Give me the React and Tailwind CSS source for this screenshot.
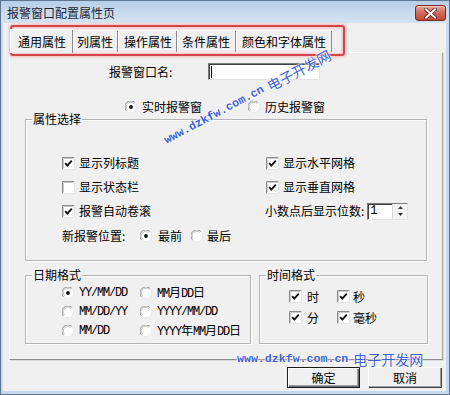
import React from "react";

const CN = "font-['Noto_Sans_CJK_SC','Noto_Sans',sans-serif]";
const MONO = "font-['Liberation_Mono',monospace]";
const DM = `${MONO} text-[12px] tracking-[-1.2px]`;

function Check({ checked = true }) {
  return (
    <svg width="13" height="13" viewBox="0 0 13 13" className="shrink-0 block">
      <rect x="0" y="0" width="13" height="13" fill="#ffffff" />
      <path d="M0.5 12.5 V0.5 H12.5" fill="none" stroke="#8a8a8a" />
      <path d="M1.5 11.5 V1.5 H11.5" fill="none" stroke="#c8c8c8" />
      <path d="M12.5 0.5 V12.5 H0.5" fill="none" stroke="#e4e4e4" />
      {checked && (
        <polyline points="3.2,6.2 5.3,8.6 9.8,3.6" fill="none" stroke="#111" strokeWidth="1.9" />
      )}
    </svg>
  );
}

function Radio({ checked = false }) {
  return (
    <svg width="12" height="12" viewBox="0 0 12 12" className="shrink-0 block">
      <circle cx="6" cy="6" r="5.5" fill="#ffffff" />
      <path d="M1.6 10 A5.2 5.2 0 0 1 10 1.6" fill="none" stroke="#8c8c8c" strokeWidth="1" />
      <path d="M2.6 9 A4 4 0 0 1 9 2.6" fill="none" stroke="#c4c4c4" strokeWidth="1" />
      <path d="M10 1.6 A5.2 5.2 0 0 1 1.6 10" fill="none" stroke="#e8e8e8" strokeWidth="1" />
      {checked && <circle cx="6" cy="6" r="1.9" fill="#111" />}
    </svg>
  );
}

function Group({ title, className = "", children }) {
  return (
    <div className={`relative border border-[#b4b4b4] shadow-[inset_1px_1px_0_#ffffff,1px_1px_0_#ffffff] ${className}`}>
      <span className="absolute left-[6px] -top-[8px] bg-[#f0f0f0] px-[1px] leading-[14px]">
        {title}
      </span>
      {children}
    </div>
  );
}

function Button({ children, isDefault = false }) {
  return (
    <div
      className={`h-[21px] flex items-center justify-center bg-[#f0f0f0] ${
        isDefault
          ? "w-[73px] border border-[#1a1a1a] shadow-[inset_1px_1px_0_#ffffff,inset_-1px_-1px_0_#696969,inset_-2px_-2px_0_#a0a0a0]"
          : "w-[74px] shadow-[inset_1px_1px_0_#ffffff,inset_-1px_-1px_0_#404040,inset_-2px_-2px_0_#a0a0a0]"
      }`}
    >
      <span className="text-[12px] leading-[14px]">{children}</span>
    </div>
  );
}

function Watermark({ className = "" }) {
  return (
    <div
      className={`absolute flex items-center whitespace-nowrap text-[#3d5fd8] [text-shadow:0_0_2px_#ffffff,0_0_2px_#ffffff,0_0_1px_#ffffff] ${className}`}
    >
      <span className={`${MONO} text-[11.6px] leading-[16px] font-bold`}>www.dzkfw.com.cn</span>
      <span className={`${CN} text-[14px] leading-[16px] ml-[5px]`}>电子开发网</span>
    </div>
  );
}

export default function App() {
  return (
    <div
      className={`${CN} relative w-[450px] h-[395px] overflow-hidden flex flex-col bg-[#c6d9ee] border border-[#5f7590] text-[12px] leading-[14px] text-black`}
    >
      {/* Title bar */}
      <div className="h-[22px] shrink-0 flex items-start justify-between pl-[6px] pr-[3px] bg-gradient-to-b from-[#b8cfe9] to-[#d5e3f2]">
        <span className="mt-[5px] text-[12px] leading-[14px] text-[#1b2635]">报警窗口配置属性页</span>
        <div className="mt-[4px] w-[31px] h-[16px] rounded-[3px] border border-[#7a2a22] bg-gradient-to-b from-[#e6a596] via-[#d2695a] to-[#c24a38] shadow-[inset_0_1px_0_#f3c9bf] flex items-center justify-center">
          <svg width="13" height="11" viewBox="0 0 13 11">
            <path d="M2 1.5 L11 9.5 M11 1.5 L2 9.5" stroke="#5a1f18" strokeWidth="3.6" strokeLinecap="square" />
            <path d="M2 1.5 L11 9.5 M11 1.5 L2 9.5" stroke="#ffffff" strokeWidth="2" strokeLinecap="square" />
          </svg>
        </div>
      </div>

      {/* Client area */}
      <div className="ml-[2px] mr-[3px] mb-[3px] flex-1 flex flex-col bg-[#f0f0f0]">
        {/* Tabs */}
        <div className="h-[29px] flex items-end pl-[7px]">
          <div className="relative z-10 h-[24px] -mb-[1px] pl-[7px] pr-[7px] flex items-center bg-[#f0f0f0] border-l border-t border-white shadow-[inset_-1px_0_0_#8a8a8a]">
            通用属性
          </div>
          <div className="h-[22px] pl-[4px] pr-[5px] flex items-center border-t border-white shadow-[inset_-1px_0_0_#8a8a8a,inset_1px_0_0_#ffffff]">
            列属性
          </div>
          <div className="h-[22px] pl-[6px] pr-[5px] flex items-center border-t border-white shadow-[inset_-1px_0_0_#8a8a8a,inset_1px_0_0_#ffffff]">
            操作属性
          </div>
          <div className="h-[22px] pl-[5px] pr-[6px] flex items-center border-t border-white shadow-[inset_-1px_0_0_#8a8a8a,inset_1px_0_0_#ffffff]">
            条件属性
          </div>
          <div className="h-[22px] pl-[6px] pr-[6px] flex items-center border-t border-white shadow-[inset_-1px_0_0_#8a8a8a,inset_1px_0_0_#ffffff]">
            颜色和字体属性
          </div>
        </div>

        {/* Panel */}
        <div className="ml-[6px] w-[434px] h-[308px] flex flex-col border-l border-t border-white border-r border-r-[#a0a0a0] border-b border-b-[#8c8c8c] shadow-[1px_1px_0_#dcdcdc]">
          {/* Name row */}
          <div className="mt-[10px] pl-[99px] flex items-center h-[17px]">
            <span className="w-[66px]">报警窗口名:</span>
            <div className="ml-[33px] w-[112px] h-[17px] bg-white border-l border-t border-[#7a7a7a] border-r border-r-[#e3e3e3] border-b border-b-[#e3e3e3] shadow-[inset_1px_1px_0_#404040] flex items-center">
              <div className="ml-[2px] w-[1px] h-[12px] bg-black" />
            </div>
          </div>

          {/* Window type radios */}
          <div className="mt-[20px] pl-[115px] flex items-center h-[14px]">
            <Radio checked />
            <span className="ml-[5px]">实时报警窗</span>
            <div className="ml-[46px]">
              <Radio />
            </div>
            <span className="ml-[5px]">历史报警窗</span>
          </div>

          {/* 属性选择 */}
          <Group title="属性选择" className="mt-[5px] ml-[15px] w-[402px] h-[142px] shrink-0">
            <div className="pt-[31px] pl-[36px] flex flex-col">
              <div className="h-[24px] flex items-center">
                <div className="w-[204px] flex items-center">
                  <Check />
                  <span className="ml-[4px]">显示列标题</span>
                </div>
                <Check />
                <span className="ml-[4px]">显示水平网格</span>
              </div>
              <div className="h-[24px] flex items-center">
                <div className="w-[204px] flex items-center">
                  <Check checked={false} />
                  <span className="ml-[4px]">显示状态栏</span>
                </div>
                <Check />
                <span className="ml-[4px]">显示垂直网格</span>
              </div>
              <div className="h-[24px] flex items-center">
                <div className="w-[203px] flex items-center">
                  <Check />
                  <span className="ml-[4px]">报警自动卷滚</span>
                </div>
                <span>小数点后显示位数:</span>
                <div className="ml-[3px] w-[41px] h-[17px] bg-white flex border-l border-t border-[#7a7a7a] border-r border-r-[#e3e3e3] border-b border-b-[#e3e3e3] shadow-[inset_1px_1px_0_#404040]">
                  <span className={`${MONO} flex-1 pl-[2px] text-[12px] leading-[15px]`}>1</span>
                  <div className="w-[15px] flex flex-col border-l border-[#d8d8d8] bg-[#f4f4f4]">
                    <div className="flex-1 flex items-center justify-center">
                      <svg width="5" height="3" viewBox="0 0 5 3"><path d="M2.5 0 L5 3 H0 Z" fill="#333" /></svg>
                    </div>
                    <div className="flex-1 flex items-center justify-center">
                      <svg width="5" height="3" viewBox="0 0 5 3"><path d="M0 0 H5 L2.5 3 Z" fill="#333" /></svg>
                    </div>
                  </div>
                </div>
              </div>
              <div className="h-[25px] flex items-center">
                <span className="w-[66px]">新报警位置:</span>
                <div className="ml-[12px]">
                  <Radio checked />
                </div>
                <span className="ml-[6px]">最前</span>
                <div className="ml-[9px]">
                  <Radio />
                </div>
                <span className="ml-[4px]">最后</span>
              </div>
            </div>
          </Group>

          {/* Bottom groups */}
          <div className="mt-[14px] ml-[15px] flex gap-[8px]">
            <Group title="日期格式" className="w-[226px] h-[69px]">
              <div className="pt-[7px] pl-[36px] flex flex-col">
                <div className="h-[19px] flex items-center">
                  <div className="w-[78px] flex items-center">
                    <Radio checked />
                    <span className={`${DM} ml-[5px]`}>YY/MM/DD</span>
                  </div>
                  <Radio />
                  <span className="ml-[5px] whitespace-nowrap">
                    <span className={DM}>MM</span>月<span className={DM}>DD</span>日
                  </span>
                </div>
                <div className="h-[19px] flex items-center">
                  <div className="w-[78px] flex items-center">
                    <Radio />
                    <span className={`${DM} ml-[5px]`}>MM/DD/YY</span>
                  </div>
                  <Radio />
                  <span className={`${DM} ml-[5px]`}>YYYY/MM/DD</span>
                </div>
                <div className="h-[19px] flex items-center">
                  <div className="w-[78px] flex items-center">
                    <Radio />
                    <span className={`${DM} ml-[5px]`}>MM/DD</span>
                  </div>
                  <Radio />
                  <span className="ml-[5px] whitespace-nowrap">
                    <span className={DM}>YYYY</span>年<span className={DM}>MM</span>月<span className={DM}>DD</span>日
                  </span>
                </div>
              </div>
            </Group>
            <Group title="时间格式" className="w-[169px] h-[69px]">
              <div className="pt-[10px] pl-[29px] flex flex-col">
                <div className="h-[21px] flex items-center">
                  <div className="w-[48px] flex items-center">
                    <Check />
                    <span className="ml-[5px]">时</span>
                  </div>
                  <Check />
                  <span className="ml-[3px]">秒</span>
                </div>
                <div className="h-[21px] flex items-center">
                  <div className="w-[48px] flex items-center">
                    <Check />
                    <span className="ml-[5px]">分</span>
                  </div>
                  <Check />
                  <span className="ml-[3px]">毫秒</span>
                </div>
              </div>
            </Group>
          </div>
        </div>

        {/* Buttons */}
        <div className="mt-[7px] mr-[4px] flex justify-end gap-[8px]">
          <Button isDefault>确定</Button>
          <Button>取消</Button>
        </div>
      </div>

      {/* Red highlight around tabs */}
      <div className="absolute left-[9px] top-[24px] w-[335px] h-[31px] rounded-[3px] border-2 border-[#d2454c] shadow-[0_0_3px_1px_#f2b6bb,inset_0_0_3px_1px_#f2b6bb]" />

      {/* Watermarks */}
      <Watermark className="left-[236px] top-[350px]" />
      <Watermark className="left-[153px] top-[88px] w-[188px] h-[16px] -rotate-[28deg] origin-center" />
    </div>
  );
}
